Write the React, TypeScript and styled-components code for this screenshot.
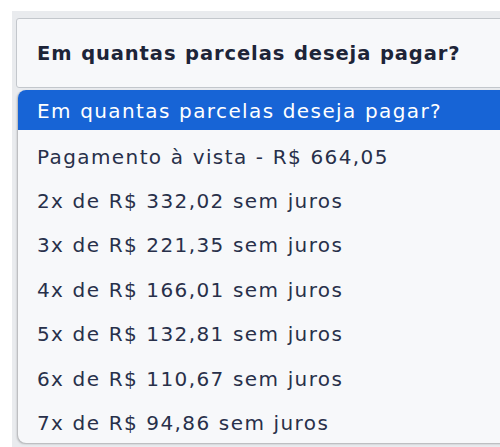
import React from "react";
import styled, { createGlobalStyle } from "styled-components";

const Global = createGlobalStyle`
  html, body { margin: 0; padding: 0; background: #ffffff; }
  body { font-family: "DejaVu Sans", "Noto Sans", sans-serif; overflow: hidden; }
`;

const Page = styled.div`
  position: relative;
  width: 500px;
  height: 447px;
  padding: 11px 0 0 12px;
  box-sizing: border-box;
  overflow: hidden;
`;

const Panel = styled.div`
  background: #e9ebee;
  height: 440px;
  width: 520px;
  padding: 7px 0 0 4px;
  box-sizing: border-box;
`;

const SelectBox = styled.div`
  height: 70px;
  width: 560px;
  border: 1px solid #c3c7cc;
  border-radius: 3px;
  background: #f7f8fa;
  box-sizing: border-box;
  display: flex;
  align-items: center;
  padding-left: 20px;
  font-weight: 700;
  font-size: 19.5px;
  letter-spacing: 0.9px;
  word-spacing: 1px;
  color: #1d2438;
`;

const Menu = styled.ul`
  position: absolute;
  left: 18px;
  top: 90px;
  width: 560px;
  height: 353px;
  margin: 0;
  padding: 0;
  list-style: none;
  background: #f7f8fa;
  border-radius: 8px;
  overflow: hidden;
  box-shadow: -1px 1px 2px rgba(0, 0, 0, 0.25);
`;

const Option = styled.li<{ $active?: boolean }>`
  display: flex;
  align-items: center;
  box-sizing: border-box;
  height: ${(p) => (p.$active ? "40px" : "44.43px")};
  margin-bottom: ${(p) => (p.$active ? "4.43px" : "0")};
  padding: ${(p) => (p.$active ? "2px 0 0 19px" : "0 0 0 19px")};
  font-size: 20px;
  letter-spacing: 1.4px;
  word-spacing: 0.5px;
  color: ${(p) => (p.$active ? "#ffffff" : "#28304a")};
  background: ${(p) => (p.$active ? "#1764d6" : "transparent")};
  white-space: nowrap;
`;

const options = [
  "Em quantas parcelas deseja pagar?",
  "Pagamento à vista - R$ 664,05",
  "2x de R$ 332,02 sem juros",
  "3x de R$ 221,35 sem juros",
  "4x de R$ 166,01 sem juros",
  "5x de R$ 132,81 sem juros",
  "6x de R$ 110,67 sem juros",
  "7x de R$ 94,86 sem juros",
];

export default function App() {
  return (
    <>
      <Global />
      <Page>
        <Panel>
          <SelectBox>Em quantas parcelas deseja pagar?</SelectBox>
        </Panel>
        <Menu>
          {options.map((o, i) => (
            <Option key={o} $active={i === 0}>
              {o}
            </Option>
          ))}
        </Menu>
      </Page>
    </>
  );
}
